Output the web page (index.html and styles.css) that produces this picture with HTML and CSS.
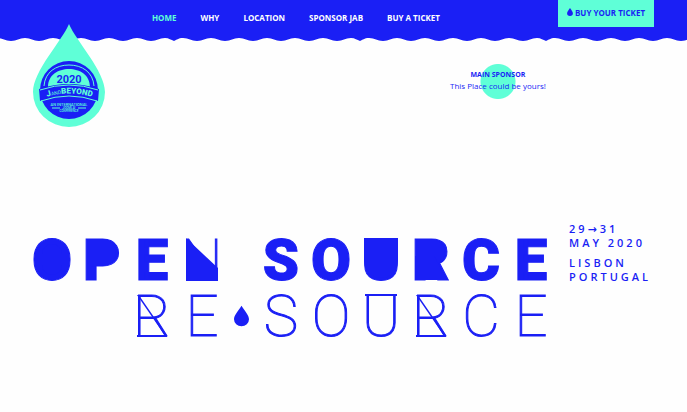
FILE: index.html
```html
<!DOCTYPE html>
<html lang="en">
<head>
<meta charset="utf-8">
<meta name="viewport" content="width=device-width, initial-scale=1">
<title>J and Beyond 2020</title>
<link rel="stylesheet" href="styles.css">
</head>
<body>
<header class="site-header">
  <div class="bar">
    <nav class="nav" aria-label="Main">
      <a class="active" href="#home">HOME</a>
      <a href="#why">WHY</a>
      <a href="#location">LOCATION</a>
      <a href="#sponsor">SPONSOR JAB</a>
      <a href="#buy">BUY A TICKET</a>
    </nav>
    <a class="cta" href="#buy">
      <svg class="cta-drop" viewBox="0 0 16 22" aria-hidden="true"><path d="M8 0C5 5 0 10 0 14.5a8 7.5 0 0 0 16 0C16 10 11 5 8 0Z"/></svg>
      <span>BUY YOUR TICKET</span>
    </a>
  </div>
  <svg class="wave" aria-hidden="true">
    <defs>
      <pattern id="wave" x="-12" y="0" width="186" height="5" patternUnits="userSpaceOnUse">
        <path d="M0 0V4C3 3 4 1 9 1C15 1 17 4 23 4S31 1 37 1S45 4 51 4S59 1 65 1S73 4 79 4S87 1 93 1S101 4 107 4S115 1 121 1S129 4 135 4S143 1 149 1S157 4 163 4S171 1 177 1C181 1 183 3 186 4V0Z"/>
      </pattern>
    </defs>
    <rect width="100%" height="5" fill="url(#wave)"/>
  </svg>
  <a class="logo" href="#home" aria-label="J and Beyond 2020">
    <svg viewBox="0 0 72 104">
      <path class="teal" d="M36 0C43 17 72 47 72 68A36 35 0 0 1 0 68C0 47 29 17 36 0Z"/>
      <circle class="blue" cx="36" cy="66" r="29"/>
      <path class="teal" d="M15 63C15 51 25 45 36 45S57 51 57 63Q36 58 15 63Z"/>
      <path class="line" d="M11 62C12 48 23 41 36 41S60 48 61 62"/>
      <path class="blue" d="M6 65Q36 55 66 65L65 77Q36 66 7 77Z"/>
      <path class="line" d="M7 66Q36 56 65 66M8 77Q36 67 64 77M19 84H27M45 84H53"/>
      <path id="arc" fill="none" d="M10 74Q36 65 63 74"/>
      <text class="year" x="36" y="59">2020</text>
      <text class="name"><textPath href="#arc" startOffset="50%">J<tspan class="and">AND</tspan>BEYOND</textPath></text>
      <text class="tiny wide" x="36" y="82">AN INTERNATIONAL</text>
      <text class="tiny" x="36" y="85">JOOMLA!</text>
      <text class="tiny" x="36" y="88">CONFERENCE</text>
    </svg>
  </a>
</header>
<main>
  <section class="sponsor">
    <h2>MAIN SPONSOR</h2>
    <p>This Place could be yours!</p>
  </section>
  <section class="hero">
    <h1 class="title">
      <span class="row bold"><span class="o-fill">O</span><span class="p-fill">P</span><span>E</span><span class="n-fill">N</span><i></i><span>S</span><span>O</span><span class="u-fill">U</span><span class="p-fill r-fill">R</span><span>C</span><span>E</span></span>
      <span class="row thin"><i></i><i></i><span class="r-line">R</span><span>E</span><svg class="drop" viewBox="0 0 16 22" aria-hidden="true"><path d="M8 0C5 5 0 10 0 14.5a8 7.5 0 0 0 16 0C16 10 11 5 8 0Z"/></svg><span>S</span><span>O</span><span class="u-line">U</span><span class="r-line">R</span><span>C</span><span>E</span></span>
    </h1>
    <div class="details">
      <p>29<span class="arrow">→</span>31<br>MAY 2020</p>
      <p>LISBON<br>PORTUGAL</p>
    </div>
  </section>
</main>
</body>
</html>
```
FILE: styles.css
```css
:root {
  --blue: #1a1ff5;
  --teal: #5fffd7;
}

* { box-sizing: border-box; }

body {
  margin: 0;
  background: #fefefe;
  color: var(--blue);
  font-family: "Open Sans", "Noto Sans", sans-serif;
}

a { color: inherit; text-decoration: none; }
h1, h2, p { margin: 0; }

.site-header { position: relative; }

.bar {
  display: flex;
  justify-content: space-between;
  align-items: flex-start;
  padding: 0 33px 0 152px;
  height: 37px;
  background: var(--blue);
}

.nav {
  display: flex;
  gap: 24px;
  padding-top: 12px;
  color: #fff;
  font-size: 8px;
  font-weight: 700;
  line-height: 12px;
  white-space: nowrap;
}

.nav .active { color: var(--teal); }

.cta {
  display: flex;
  justify-content: center;
  gap: 2px;
  width: 96px;
  height: 27px;
  padding-top: 7px;
  background: var(--teal);
  font-size: 8px;
  font-weight: 700;
  line-height: 12px;
  white-space: nowrap;
}

.cta-drop { width: 6px; height: 8px; margin-top: 1px; fill: var(--blue); }

.wave { display: block; width: 100%; height: 5px; fill: var(--blue); }

.logo { position: absolute; left: 33px; top: 24px; width: 72px; }
.logo svg { display: block; width: 100%; }
.logo text { text-anchor: middle; font-family: Roboto, sans-serif; }
.teal { fill: var(--teal); }
.blue { fill: var(--blue); }
.line { fill: none; stroke: var(--teal); stroke-width: 1; }
.logo .year { fill: var(--blue); font-size: 11px; font-weight: 700; }
.name { fill: var(--teal); font-size: 8px; font-weight: 900; }
.and { font-size: 5px; font-weight: 400; }
.tiny { fill: var(--teal); font-size: 3px; font-weight: 500; }
.tiny.wide { font-size: 4px; }

.sponsor {
  width: max-content;
  margin: 20px 0 0 450px;
  padding: 7px 0 9px;
  background: radial-gradient(circle at center, var(--teal) 17px, transparent 18px);
  text-align: center;
}

.sponsor h2 { font-size: 7px; font-weight: 700; line-height: 11px; }
.sponsor p { font-size: 8px; line-height: 12px; }

.hero {
  display: flex;
  gap: 13px;
  margin-top: 131px;
  padding-left: 27px;
}

.title { font-family: Roboto, sans-serif; font-size: 58px; line-height: 56px; }

.row {
  display: grid;
  grid-template-columns: repeat(4, 50px) 29px repeat(6, 50px);
  text-align: center;
}

.row span { position: relative; }
.row span::before,
.row span::after { position: absolute; background: var(--blue); }
.bold { font-weight: 900; -webkit-text-stroke: 1px var(--blue); }
.thin { font-weight: 100; -webkit-text-stroke: 1px var(--blue); }
.drop { align-self: center; justify-self: center; width: 15px; height: 22px; fill: var(--blue); }

.o-fill::before { content: ""; inset: 12px 15px 13px; border-radius: 10px; }
.p-fill::before { content: ""; left: 10px; top: 7px; width: 29px; height: 27px; border-radius: 0 14px 14px 0; }
.row .r-fill::after { content: ""; inset: 24px 9px 8px; clip-path: polygon(0 0, 60% 0, 100% 100%, 0 100%); }
.u-fill::before { content: ""; inset: 6px 8px 10px; border-radius: 0 0 17px 17px; }
.n-fill { font-weight: 100; }
.n-fill::before { content: ""; inset: 6px 9px 7px; clip-path: polygon(0 0, 100% 70%, 100% 100%, 0 100%); }
.u-line::before { content: ""; left: 9px; right: 9px; top: 6px; height: 2px; }
.r-line::before { content: ""; inset: 7px 10px 8px; clip-path: polygon(0 0, 6% 0, 100% 100%, 94% 100%); }
.r-line::after { content: ""; left: 10px; right: 10px; bottom: 7px; height: 2px; }

.details {
  margin-top: -10px;
  font-size: 11px;
  font-weight: 600;
  line-height: 14px;
  letter-spacing: 3px;
  white-space: nowrap;
}

.details p + p { margin-top: 6px; }
.arrow { font-family: "DejaVu Sans", sans-serif; line-height: 1; }
```
